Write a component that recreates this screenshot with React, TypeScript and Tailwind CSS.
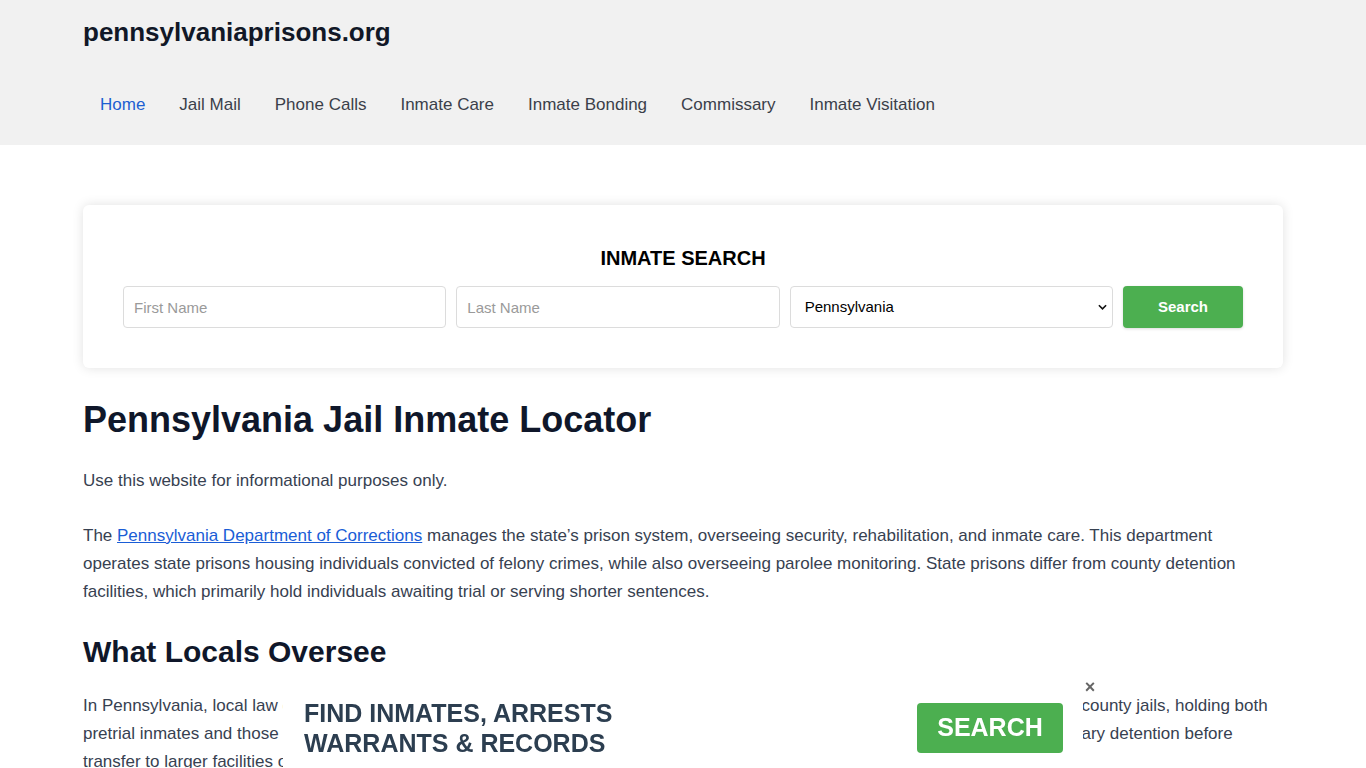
import { useState, type FC } from "react";

const navItems = [
  "Home",
  "Jail Mail",
  "Phone Calls",
  "Inmate Care",
  "Inmate Bonding",
  "Commissary",
  "Inmate Visitation",
];

const Header: FC = () => (
  <header className="bg-[#f1f1f1]">
    <div className="mx-auto w-[1200px] pt-[17px] pb-[28px]">
      <a href="#" className="block text-[26px] leading-[30px] font-bold text-[#111827]">
        pennsylvaniaprisons.org
      </a>
      <nav className="mt-[46px] flex">
        {navItems.map((item, i) => (
          <a
            key={item}
            href="#"
            className={`px-[17px] text-[17px] leading-[24px] ${
              i === 0 ? "text-[#1d5fd1]" : "text-[#3b3f4a]"
            }`}
          >
            {item}
          </a>
        ))}
      </nav>
    </div>
  </header>
);

const inputCls =
  "h-[42px] w-full min-w-0 rounded-[4px] border border-[#dcdcdc] px-[10px] text-[15px] text-[#333] placeholder:text-[#9a9a9a] outline-none";

const SearchCard: FC = () => (
  <section className="mt-[60px] rounded-[6px] bg-white px-[40px] pt-[41px] pb-[40px] shadow-[0_0_12px_rgba(0,0,0,0.12)]">
    <h2 className="text-center text-[20px] leading-[24px] font-bold text-black">INMATE SEARCH</h2>
    <form
      className="mt-[16px] grid grid-cols-[1fr_1fr_1fr_120px] gap-[10px]"
      onSubmit={(e) => e.preventDefault()}
    >
      <input placeholder="First Name" className={inputCls} />
      <input placeholder="Last Name" className={inputCls} />
      <div className="relative min-w-0">
        <select className="h-[42px] w-full appearance-none rounded-[4px] border border-[#dcdcdc] bg-white pt-[1px] pl-[14px] text-[15px] text-black outline-none">
          <option>Pennsylvania</option>
        </select>
        <svg
          viewBox="0 0 10 6"
          className="pointer-events-none absolute top-1/2 right-[6px] h-[6px] w-[9px] -translate-y-1/2"
        >
          <path d="M1 1l4 4 4-4" fill="none" stroke="#111" strokeWidth="1.8" />
        </svg>
      </div>
      <button className="h-[42px] w-[120px] rounded-[4px] bg-[#4caf50] pt-[1px] text-[15px] font-bold text-white shadow-[0_1px_3px_rgba(0,0,0,0.15)]">
        Search
      </button>
    </form>
  </section>
);

const BottomBanner: FC = () => {
  const [open, setOpen] = useState(true);
  if (!open) return null;
  return (
    <div className="fixed bottom-0 left-1/2 z-10 flex h-[80px] w-[800px] -translate-x-1/2 items-center justify-between bg-white pr-[20px] pl-[21px]">
      <p className="text-[25px] leading-[30px] font-bold text-[#2c3e50]">
        FIND INMATES, ARRESTS
        <br />
        WARRANTS &amp; RECORDS
      </p>
      <button className="h-[50px] w-[146px] rounded-[4px] bg-[#4caf50] text-[25px] font-bold text-white">
        SEARCH
      </button>
      <button
        onClick={() => setOpen(false)}
        className="absolute top-[-9px] right-[-15px] h-[16px] w-[16px] text-[18px] leading-[16px] font-bold text-[#666]"
      >
        ×
      </button>
    </div>
  );
};

export default function App() {
  return (
    <div className="min-h-screen bg-white font-['Liberation_Sans',Arial,sans-serif]">
      <Header />
      <main className="mx-auto w-[1200px] pb-[120px]">
        <SearchCard />
        <h1 className="mt-[30px] text-[36px] leading-[43px] font-bold text-[#0f172a]">
          Pennsylvania Jail Inmate Locator
        </h1>
        <p className="mt-[26px] text-[17px] leading-[28px] text-[#374151]">
          Use this website for informational purposes only.
        </p>
        <p className="mt-[27px] text-[17px] leading-[28px] text-[#374151]">
          The{" "}
          <a href="#" className="text-[#1a5dd6] underline">
            Pennsylvania Department of Corrections
          </a>{" "}
          manages the state’s prison system, overseeing security, rehabilitation, and inmate care. This department
          operates state prisons housing individuals convicted of felony crimes, while also overseeing parolee
          monitoring. State prisons differ from county detention facilities, which primarily hold individuals awaiting
          trial or serving shorter sentences.
        </p>
        <h2 className="mt-[28px] text-[30px] leading-[36px] font-bold text-[#0f172a]">What Locals Oversee</h2>
        <p className="mt-[22px] text-[17px] leading-[28px] text-[#374151]">
          In Pennsylvania, local law enforcement agencies, including the county sheriffs’ officers and municipal police
          departments, administer county jails, holding both pretrial inmates and those serving short sentences for
          misdemeanor offenses or probation violations. County facilities provide temporary detention before transfer
          to larger facilities or release back into the community once a case is resolved.
        </p>
        <p className="mt-[24px] text-[17px] leading-[28px] text-[#374151]">
          County jails also coordinate with courts, probation offices and state agencies to track each inmate’s
          status, schedule hearings and arrange visitation, mail and commissary services for those in custody.
        </p>
      </main>
      <BottomBanner />
    </div>
  );
}
